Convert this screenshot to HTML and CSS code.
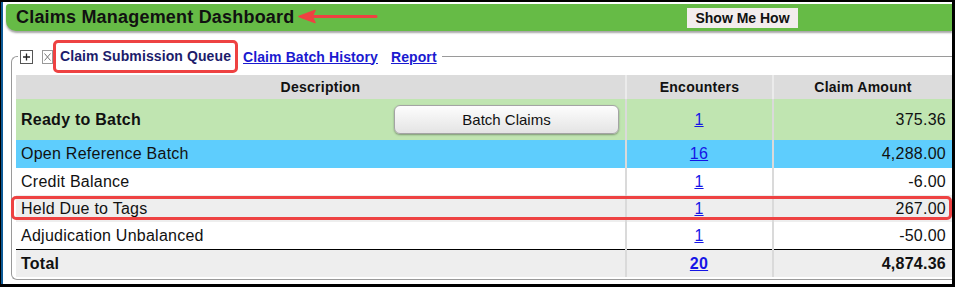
FILE: index.html
```html
<!DOCTYPE html>
<html lang="en">
<head>
    <meta charset="UTF-8">
    <title>Claims Management Dashboard</title>
    <link rel="stylesheet" href="styles.css">
</head>
<body>
    <div class="frame">
        <div class="page">
            <div class="header">
                <h1 class="title">Claims Management Dashboard</h1>
                <button class="help-btn" type="button">Show Me How</button>
            </div>

            <fieldset class="queue">
                <legend class="tabs">
                    <span class="tool-icon">
                        <svg width="13" height="14" viewBox="0 0 13 14">
                            <rect x="0.5" y="0.5" width="12" height="13" fill="#fff" stroke="#555"/>
                            <path d="M3 7H10M6.5 3.5V10.5" stroke="#222" stroke-width="1.3"/>
                        </svg>
                    </span>
                    <span class="tool-icon close-icon">
                        <svg width="11" height="14" viewBox="0 0 11 14">
                            <rect x="0.5" y="0.5" width="10" height="13" fill="#fff" stroke="#999"/>
                            <path d="M2.5 3.5L8.5 10.5M8.5 3.5L2.5 10.5" stroke="#777" stroke-width="1"/>
                        </svg>
                    </span>
                    <span class="tab-current">Claim Submission Queue</span>
                    <a href="#" class="tab-link">Claim Batch History</a>
                    <a href="#" class="tab-link tab-report">Report</a>
                </legend>

                <table class="claims">
                    <colgroup>
                        <col class="col-desc">
                        <col class="col-enc">
                        <col>
                    </colgroup>
                    <thead>
                        <tr>
                            <th>Description</th>
                            <th class="divider">Encounters</th>
                            <th class="divider">Claim Amount</th>
                        </tr>
                    </thead>
                    <tbody>
                        <tr class="row-ready">
                            <td>
                                <div class="ready-cell">
                                    <span class="strong">Ready to Batch</span>
                                    <button class="batch-btn" type="button">Batch Claims</button>
                                </div>
                            </td>
                            <td class="divider center"><a href="#">1</a></td>
                            <td class="divider amount">375.36</td>
                        </tr>
                        <tr class="row-open">
                            <td>Open Reference Batch</td>
                            <td class="divider center"><a href="#">16</a></td>
                            <td class="divider amount">4,288.00</td>
                        </tr>
                        <tr class="row-plain">
                            <td>Credit Balance</td>
                            <td class="divider center"><a href="#">1</a></td>
                            <td class="divider amount">-6.00</td>
                        </tr>
                        <tr class="row-held">
                            <td>Held Due to Tags</td>
                            <td class="divider center"><a href="#">1</a></td>
                            <td class="divider amount">267.00</td>
                        </tr>
                        <tr class="row-plain">
                            <td>Adjudication Unbalanced</td>
                            <td class="divider center"><a href="#">1</a></td>
                            <td class="divider amount">-50.00</td>
                        </tr>
                        <tr class="row-total">
                            <td>Total</td>
                            <td class="divider center"><a href="#">20</a></td>
                            <td class="divider amount">4,874.36</td>
                        </tr>
                    </tbody>
                </table>
            </fieldset>

            <!-- callout annotations -->
            <svg class="callout-arrow" width="84" height="20" viewBox="0 0 84 20">
                <path d="M14 9.5H80" stroke="#ee4242" stroke-width="3" stroke-linecap="round"/>
                <path d="M3 9.5L19 3.5L16 9.5L19 15.5Z" fill="#ee4242" stroke="#ee4242" stroke-width="1.5" stroke-linejoin="round"/>
            </svg>
            <div class="callout-row"></div>
        </div>
    </div>
</body>
</html>
```

FILE: styles.css
```css
body {
    margin: 0;
    background: #fff;
    font-family: "Liberation Sans", Arial, sans-serif;
    color: #111;
}
.frame {
    width: 955px;
    height: 287px;
    box-sizing: border-box;
    border-top: 2px solid #000;
    border-right: 3px solid #000;
    border-bottom: 3px solid #000;
    border-left: 1px solid #000;
    overflow: hidden;
}
.page {
    position: relative;
    height: 100%;
    border-left: 2px solid #0d5a96;
    overflow: hidden;
}
.header {
    display: flex;
    align-items: center;
    height: 27px;
    margin: 2px 0 0 3px;
    padding-left: 10px;
    background: #66bb46;
    border-radius: 3px 0 0 10px;
    box-shadow: 0 2px 2px rgba(0,0,0,0.35);
}
.title {
    width: 671px;
    margin: 0;
    font-size: 18px;
    font-weight: bold;
    line-height: 27px;
    letter-spacing: 0.2px;
    color: #111;
}
.help-btn {
    width: 111px;
    height: 20px;
    padding: 0;
    border: none;
    background: #f3eded;
    font-family: "Liberation Sans", Arial, sans-serif;
    font-size: 14px;
    font-weight: bold;
    color: #111;
}
.queue {
    margin: 9px 0 0 8px;
    padding: 2px 0 2px 4px;
    border: 1px solid #9a9a9a;
    border-right: none;
    border-radius: 6px 0 0 6px;
    min-width: 0;
}
.tabs {
    display: flex;
    align-items: center;
    margin-left: 2px;
    padding: 0 5px 0 2px;
    font-size: 14px;
    font-weight: bold;
    letter-spacing: 0.1px;
}
.tool-icon {
    display: flex;
}
.close-icon {
    margin-left: 9px;
}
.tab-current {
    height: 27px;
    line-height: 27px;
    padding: 0 4px 0 4px;
    border: 3px solid #ee4242;
    border-radius: 5px;
    color: #1c1c6b;
}
.tab-link {
    margin-left: 5px;
    color: #1a1ad0;
    text-decoration: underline;
}
.tab-report {
    margin-left: 13px;
}
.claims {
    width: 100%;
    border-collapse: collapse;
    table-layout: fixed;
    font-size: 16px;
    letter-spacing: 0.25px;
}
.col-desc {
    width: 610px;
}
.col-enc {
    width: 147px;
}
.claims th {
    height: 24px;
    padding: 0;
    background: #dcdcdc;
    font-size: 14px;
    font-weight: bold;
    text-align: center;
}
.claims th.divider {
    border-left: 2px solid #ebebeb;
}
.claims td {
    height: 27px;
    padding: 0 6px 0 5px;
    vertical-align: middle;
}
.claims td.divider {
    border-left: 2px solid #dadada;
}
.claims .center {
    text-align: center;
}
.claims .amount {
    text-align: right;
}
.claims a {
    color: #1515e6;
}
.row-ready td {
    height: 41px;
    background: #c0e5b1;
}
.row-open td {
    height: 28px;
    background: #5ecdfd;
}
.row-plain td {
    background: #fff;
}
.row-held td {
    background: #eeeeee;
}
.row-total td {
    background: #eeeeee;
    border-top: 1px solid #000;
    font-weight: bold;
}
.ready-cell {
    display: flex;
    justify-content: space-between;
    align-items: center;
}
.strong {
    font-weight: bold;
}
.batch-btn {
    width: 225px;
    height: 29px;
    border: 1px solid #a4a4a4;
    border-radius: 6px;
    background: linear-gradient(#fdfdfd, #e4e4e4);
    box-shadow: 0 1px 2px rgba(0,0,0,0.35);
    font-family: "Liberation Sans", Arial, sans-serif;
    font-size: 15px;
    letter-spacing: 0;
    color: #111;
}
.callout-arrow {
    position: absolute;
    left: 293px;
    top: 5px;
}
.callout-row {
    position: absolute;
    left: 8px;
    top: 194px;
    width: 941px;
    height: 24px;
    box-sizing: border-box;
    border: 3px solid #ee4242;
    border-radius: 5px;
}
```
